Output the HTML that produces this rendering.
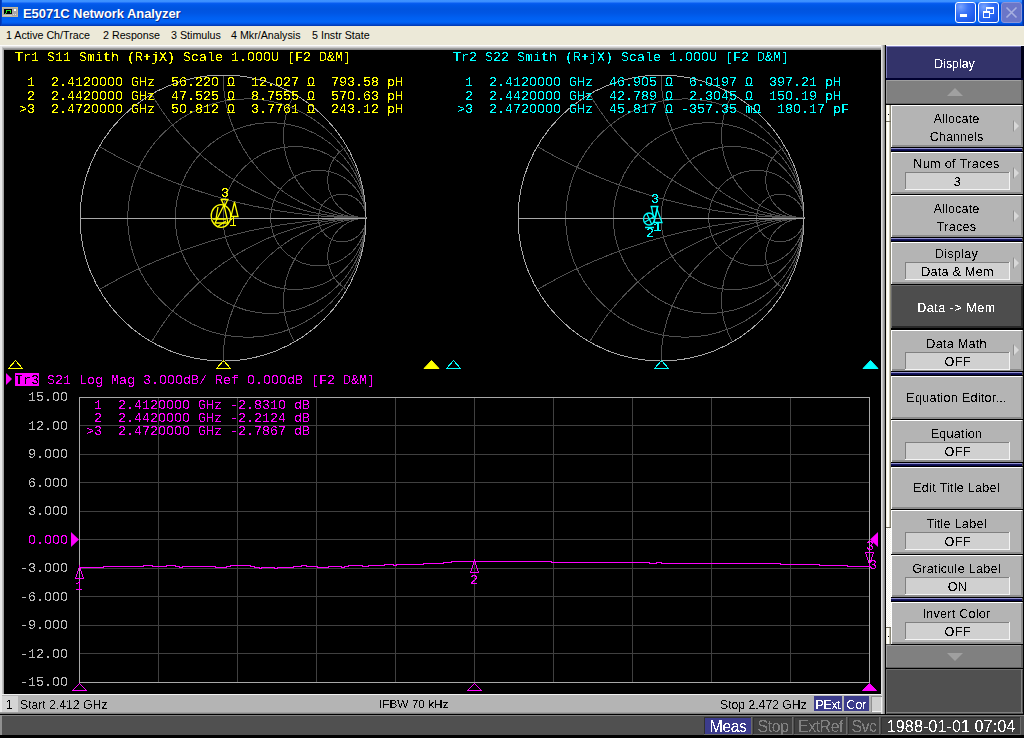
<!DOCTYPE html>
<html><head><meta charset="utf-8">
<style>
html,body{margin:0;padding:0;width:1024px;height:738px;overflow:hidden;background:#ece9d8;}
.a{position:absolute;}
.t{position:absolute;white-space:pre;line-height:1;}
.c{filter:url(#crisp);}
.m{font-family:"Liberation Mono",monospace;font-size:13.333px;}
.s{font-family:"Liberation Sans",sans-serif;}
</style></head><body>
<svg width="0" height="0" style="position:absolute"><filter id="crisp" x="-20%" y="-50%" width="140%" height="200%"><feComponentTransfer><feFuncA type="discrete" tableValues="0 1"/></feComponentTransfer></filter></svg>

<div class="a" style="left:0;top:0;width:1024px;height:26px;background:linear-gradient(to bottom,#3f93ff 0px,#3a8dff 2px,#0a5ef2 3px,#0058e8 5px,#0054df 9px,#0056e4 13px,#0060f2 18px,#0064f6 22px,#0052e0 24px,#0040c0 25px,#0038b0 26px);"></div>
<div class="a" style="left:0;top:0;width:2px;height:26px;background:linear-gradient(to right,#0030a8,#0048d0);"></div>
<div class="a" style="left:1022px;top:0;width:2px;height:26px;background:linear-gradient(to right,#0048d0,#002890);"></div>
<svg class="a" style="left:2px;top:7px" width="16" height="10" shape-rendering="crispEdges">
<rect x="0" y="0" width="16" height="10" fill="#c8b894"/>
<rect x="1" y="1" width="14" height="8" fill="#a8a8a8"/>
<rect x="2" y="2" width="8" height="5" fill="#000"/>
<polyline points="3,6 4,6 5,3 8,3 9,6" fill="none" stroke="#20e020" stroke-width="1"/>
<rect x="12" y="2" width="2" height="2" fill="#fff"/>
<rect x="11" y="7" width="1" height="1" fill="#e0e0e0"/><rect x="13" y="7" width="1" height="1" fill="#e0e0e0"/>
<rect x="1" y="8" width="9" height="1" fill="#c8c8c8"/>
</svg>
<div class="t s" style="left:24px;top:8.29px;font-size:13px;color:#0a2a8a;font-weight:bold;letter-spacing:-0.07px;">E5071C Network Analyzer</div>
<div class="t s" style="left:23px;top:7.29px;font-size:13px;color:#fff;font-weight:bold;letter-spacing:-0.07px;">E5071C Network Analyzer</div>
<div class="a" style="left:955px;top:2px;width:19px;height:19px;border:1px solid #fff;border-radius:3px;background:radial-gradient(circle at 25% 20%,#7aa4ff 0%,#3b74f6 35%,#1f5ef0 70%,#1a4fd8 100%);"></div>
<div class="a" style="left:960px;top:14px;width:7px;height:3px;background:#fff;"></div>
<div class="a" style="left:978px;top:2px;width:19px;height:19px;border:1px solid #fff;border-radius:3px;background:radial-gradient(circle at 25% 20%,#7aa4ff 0%,#3b74f6 35%,#1f5ef0 70%,#1a4fd8 100%);"></div>
<svg class="a" style="left:978px;top:2px" width="21" height="21" shape-rendering="crispEdges">
<rect x="8.5" y="5.5" width="7" height="6" fill="none" stroke="#fff"/><rect x="8" y="5" width="8" height="2" fill="#fff"/>
<rect x="5.5" y="9.5" width="6" height="6" fill="#2f6af4" stroke="#fff"/><rect x="5" y="9" width="7" height="2" fill="#fff"/>
</svg>
<div class="a" style="left:1001px;top:2px;width:19px;height:19px;border:1px solid #8a94d8;border-radius:3px;background:#6b76c8;"></div>
<svg class="a" style="left:1001px;top:2px" width="21" height="21">
<path d="M5.5 5.5 L15.5 15.5 M15.5 5.5 L5.5 15.5" stroke="#a8b0e0" stroke-width="1.6"/>
</svg>
<div class="a" style="left:0;top:26px;width:1024px;height:19px;background:#ece9d8;"></div>
<div class="t s" style="left:6px;top:30.44px;font-size:10.7px;color:#000;">1 Active Ch/Trace</div>
<div class="t s" style="left:103px;top:30.44px;font-size:10.7px;color:#000;">2 Response</div>
<div class="t s" style="left:171px;top:30.44px;font-size:10.7px;color:#000;">3 Stimulus</div>
<div class="t s" style="left:231px;top:30.44px;font-size:10.7px;color:#000;">4 Mkr/Analysis</div>
<div class="t s" style="left:312px;top:30.44px;font-size:10.7px;color:#000;">5 Instr State</div>
<div class="a" style="left:0;top:45px;width:886px;height:650px;background:#000;"></div>
<div class="a" style="left:0;top:45px;width:1024px;height:1px;background:#fcfcfc;"></div>
<div class="a" style="left:0;top:46px;width:886px;height:1px;background:#e0e0e0;"></div>
<div class="a" style="left:0;top:47px;width:886px;height:1px;background:#c8c8c8;"></div>
<div class="a" style="left:2px;top:48px;width:884px;height:1px;background:#a0a0a0;"></div>
<div class="a" style="left:3px;top:49px;width:883px;height:1px;background:#888888;"></div>
<div class="a" style="left:0;top:46px;width:2px;height:648px;background:#e8e8e8;"></div>
<div class="a" style="left:2px;top:48px;width:1px;height:646px;background:#c0c0c0;"></div>
<div class="a" style="left:3px;top:49px;width:1px;height:645px;background:#a0a0a0;"></div>
<div class="a" style="left:881px;top:45px;width:1px;height:669px;background:#e0e0e0;"></div>
<div class="a" style="left:882px;top:45px;width:1px;height:669px;background:#c4c4c4;"></div>
<div class="a" style="left:883px;top:45px;width:1px;height:669px;background:#a4a4a4;"></div>
<div class="a" style="left:884px;top:45px;width:1px;height:669px;background:#888888;"></div>
<div class="a" style="left:885px;top:45px;width:1px;height:669px;background:#000000;"></div>
<svg class="a" style="left:0;top:0" width="1024" height="738">
<g shape-rendering="crispEdges">
<circle cx="246.883" cy="218.05" r="119.167" fill="none" stroke="#505050" stroke-width="1"/>
<circle cx="270.717" cy="218.05" r="95.333" fill="none" stroke="#505050" stroke-width="1"/>
<circle cx="294.550" cy="218.05" r="71.500" fill="none" stroke="#505050" stroke-width="1"/>
<circle cx="318.383" cy="218.05" r="47.667" fill="none" stroke="#505050" stroke-width="1"/>
<circle cx="342.217" cy="218.05" r="23.833" fill="none" stroke="#505050" stroke-width="1"/>
<path d="M99.208 146.550 A533.683 533.683 0 0 0 366.050 218.050" fill="none" stroke="#505050" stroke-width="1"/>
<path d="M99.208 289.550 A533.683 533.683 0 0 1 366.050 218.050" fill="none" stroke="#505050" stroke-width="1"/>
<path d="M151.550 94.208 A247.683 247.683 0 0 0 366.050 218.050" fill="none" stroke="#505050" stroke-width="1"/>
<path d="M151.550 341.892 A247.683 247.683 0 0 1 366.050 218.050" fill="none" stroke="#505050" stroke-width="1"/>
<path d="M223.050 75.050 A143.000 143.000 0 0 0 366.050 218.050" fill="none" stroke="#505050" stroke-width="1"/>
<path d="M223.050 361.050 A143.000 143.000 0 0 1 366.050 218.050" fill="none" stroke="#505050" stroke-width="1"/>
<path d="M294.550 94.208 A82.561 82.561 0 0 0 366.050 218.050" fill="none" stroke="#505050" stroke-width="1"/>
<path d="M294.550 341.892 A82.561 82.561 0 0 1 366.050 218.050" fill="none" stroke="#505050" stroke-width="1"/>
<path d="M346.892 146.550 A38.317 38.317 0 0 0 366.050 218.050" fill="none" stroke="#505050" stroke-width="1"/>
<path d="M346.892 289.550 A38.317 38.317 0 0 1 366.050 218.050" fill="none" stroke="#505050" stroke-width="1"/>
<circle cx="223.05" cy="218.05" r="143" fill="none" stroke="#a8a8a8" stroke-width="1"/>
<line x1="80" y1="218.5" x2="367" y2="218.5" stroke="#a8a8a8" stroke-width="1"/>
<circle cx="684.883" cy="218.05" r="119.167" fill="none" stroke="#505050" stroke-width="1"/>
<circle cx="708.717" cy="218.05" r="95.333" fill="none" stroke="#505050" stroke-width="1"/>
<circle cx="732.550" cy="218.05" r="71.500" fill="none" stroke="#505050" stroke-width="1"/>
<circle cx="756.383" cy="218.05" r="47.667" fill="none" stroke="#505050" stroke-width="1"/>
<circle cx="780.217" cy="218.05" r="23.833" fill="none" stroke="#505050" stroke-width="1"/>
<path d="M537.208 146.550 A533.683 533.683 0 0 0 804.050 218.050" fill="none" stroke="#505050" stroke-width="1"/>
<path d="M537.208 289.550 A533.683 533.683 0 0 1 804.050 218.050" fill="none" stroke="#505050" stroke-width="1"/>
<path d="M589.550 94.208 A247.683 247.683 0 0 0 804.050 218.050" fill="none" stroke="#505050" stroke-width="1"/>
<path d="M589.550 341.892 A247.683 247.683 0 0 1 804.050 218.050" fill="none" stroke="#505050" stroke-width="1"/>
<path d="M661.050 75.050 A143.000 143.000 0 0 0 804.050 218.050" fill="none" stroke="#505050" stroke-width="1"/>
<path d="M661.050 361.050 A143.000 143.000 0 0 1 804.050 218.050" fill="none" stroke="#505050" stroke-width="1"/>
<path d="M732.550 94.208 A82.561 82.561 0 0 0 804.050 218.050" fill="none" stroke="#505050" stroke-width="1"/>
<path d="M732.550 341.892 A82.561 82.561 0 0 1 804.050 218.050" fill="none" stroke="#505050" stroke-width="1"/>
<path d="M784.892 146.550 A38.317 38.317 0 0 0 804.050 218.050" fill="none" stroke="#505050" stroke-width="1"/>
<path d="M784.892 289.550 A38.317 38.317 0 0 1 804.050 218.050" fill="none" stroke="#505050" stroke-width="1"/>
<circle cx="661.05" cy="218.05" r="143" fill="none" stroke="#a8a8a8" stroke-width="1"/>
<line x1="518" y1="218.5" x2="805" y2="218.5" stroke="#a8a8a8" stroke-width="1"/>
</g>
<g shape-rendering="crispEdges">
<line x1="158.5" y1="397" x2="158.5" y2="682" stroke="#404040"/>
<line x1="237.5" y1="397" x2="237.5" y2="682" stroke="#404040"/>
<line x1="316.5" y1="397" x2="316.5" y2="682" stroke="#404040"/>
<line x1="395.5" y1="397" x2="395.5" y2="682" stroke="#404040"/>
<line x1="474.5" y1="397" x2="474.5" y2="682" stroke="#404040"/>
<line x1="553.5" y1="397" x2="553.5" y2="682" stroke="#404040"/>
<line x1="632.5" y1="397" x2="632.5" y2="682" stroke="#404040"/>
<line x1="711.5" y1="397" x2="711.5" y2="682" stroke="#404040"/>
<line x1="790.5" y1="397" x2="790.5" y2="682" stroke="#404040"/>
<line x1="79" y1="425.5" x2="869" y2="425.5" stroke="#404040"/>
<line x1="79" y1="454.5" x2="869" y2="454.5" stroke="#404040"/>
<line x1="79" y1="482.5" x2="869" y2="482.5" stroke="#404040"/>
<line x1="79" y1="511.5" x2="869" y2="511.5" stroke="#404040"/>
<line x1="79" y1="539.5" x2="869" y2="539.5" stroke="#404040"/>
<line x1="79" y1="568.5" x2="869" y2="568.5" stroke="#404040"/>
<line x1="79" y1="596.5" x2="869" y2="596.5" stroke="#404040"/>
<line x1="79" y1="625.5" x2="869" y2="625.5" stroke="#404040"/>
<line x1="79" y1="653.5" x2="869" y2="653.5" stroke="#404040"/>
<rect x="79.5" y="397.5" width="790" height="285" fill="none" stroke="#a8a8a8"/>
</g>
<path d="M79 567.5H104M103.5 566V568M104 566.5H144M143.5 565V567M144 565.5H153M152.5 565V567M153 566.5H167M166.5 565V567M167 565.5H176M175.5 565V567M176 566.5H180M179.5 566V568M180 567.5H183M182.5 566V568M183 566.5H216M215.5 566V568M216 567.5H227M226.5 566V568M227 566.5H231M230.5 565V567M231 565.5H251M250.5 565V567M251 566.5H255M254.5 566V568M255 567.5H260M259.5 567V569M260 568.5H262M261.5 567V569M262 567.5H275M274.5 567V569M275 568.5H278M277.5 567V569M278 567.5H294M293.5 566V568M294 566.5H302M301.5 565V567M302 565.5H307M306.5 565V567M307 566.5H318M317.5 566V568M318 567.5H329M328.5 566V568M329 566.5H342M341.5 566V568M342 567.5H345M344.5 566V568M345 566.5H349M348.5 565V567M349 565.5H363M362.5 565V567M363 566.5H369M368.5 565V567M369 565.5H385M384.5 564V566M385 564.5H394M393.5 564V566M394 565.5H397M396.5 564V566M397 564.5H424M423.5 563V565M424 563.5H444M443.5 562V564M444 562.5H452M451.5 561V563M452 561.5H552M551.5 561V563M552 562.5H650M649.5 562V564M650 563.5H657M656.5 562V564M657 562.5H662M661.5 562V564M662 563.5H781M780.5 563V565M781 564.5H820M819.5 564V566M820 565.5H848M847.5 565V567M848 566.5H870" fill="none" stroke="#ff00ff" stroke-width="1" shape-rendering="crispEdges"/>
<path d="M15.5 360.5 L22.5 368.5 L8.5 368.5 Z" fill="none" stroke="#ffff00" stroke-width="1" shape-rendering="crispEdges"/>
<path d="M223.5 360.5 L230.5 368.5 L216.5 368.5 Z" fill="none" stroke="#ffff00" stroke-width="1" shape-rendering="crispEdges"/>
<path d="M431.5 360.5 L439.0 368.5 L424.0 368.5 Z" fill="#ffff00" stroke="#ffff00" stroke-width="1"/>
<path d="M453.5 360.5 L460.5 368.5 L446.5 368.5 Z" fill="none" stroke="#00ffff" stroke-width="1" shape-rendering="crispEdges"/>
<path d="M661.5 360.5 L668.5 368.5 L654.5 368.5 Z" fill="none" stroke="#00ffff" stroke-width="1" shape-rendering="crispEdges"/>
<path d="M870.5 360.5 L878.0 368.5 L863.0 368.5 Z" fill="#00ffff" stroke="#00ffff" stroke-width="1"/>
<path d="M6 373 L12 379 L6 385 Z" fill="#ff00ff"/>
<path d="M71 532 L79 539.5 L71 547 Z" fill="#ff00ff"/>
<path d="M878 532 L870 539.5 L878 547 Z" fill="#ff00ff"/>
<path d="M79.5 683.5 L86.5 690.5 L72.5 690.5 Z" fill="none" stroke="#ff00ff" stroke-width="1" shape-rendering="crispEdges"/>
<path d="M474.5 683.5 L481.5 690.5 L467.5 690.5 Z" fill="none" stroke="#ff00ff" stroke-width="1" shape-rendering="crispEdges"/>
<path d="M869.5 683.5 L876.5 690.5 L862.5 690.5 Z" fill="#ff00ff" stroke="#ff00ff" stroke-width="1"/>
<path d="M79.5 566.5 L83.5 578.5 L75.5 578.5 Z" fill="none" stroke="#ff00ff" stroke-width="1" shape-rendering="crispEdges"/>
<path d="M474.5 560.5 L478.5 572.5 L470.5 572.5 Z" fill="none" stroke="#ff00ff" stroke-width="1" shape-rendering="crispEdges"/>
<path d="M865.5 552.5 L873.5 552.5 L869.5 564.5 Z" fill="none" stroke="#ff00ff" stroke-width="1" shape-rendering="crispEdges"/>
<g fill="none" stroke="#ffff00" stroke-width="1.3"><ellipse cx="221" cy="216" rx="9.8" ry="11.3"/><path d="M220.5 199.5 H228.5 M221.5 200 L224.5 206.5 M227.5 200 L224.5 206.5"/><path d="M224 205 L215 223 L228 223 Z"/><path d="M218 207 L216 219 M213 219 H226 M217 227 L226 221"/><path d="M234.5 202 L231 216.5 L238 216.5 Z"/></g>
<g fill="none" stroke="#00ffff" stroke-width="1.3"><ellipse cx="649" cy="219" rx="5.5" ry="6"/><path d="M650.5 206.5 H658.5 M651.5 207 L653.5 217 M657.5 207 L655.5 217"/><path d="M657 209 L654 222.5 L662 222.5 Z"/><path d="M645 227.5 H654 M647 214 L652 225 M645 222 L655 216"/></g>
</svg>
<div class="t m c" style="left:15px;top:50.79px;color:#ffff00;">Tr1 S11 Smith (R+jX) Scale 1.OOOU [F2 D&amp;M]</div>
<div class="t m c" style="left:19px;top:76.49px;color:#ffff00;"> 1  2.412OOOO GHz  56.22O Ω  12.O27 Ω  793.58 pH</div>
<div class="t m c" style="left:19px;top:89.79px;color:#ffff00;"> 2  2.442OOOO GHz  47.525 Ω  8.7555 Ω  57O.63 pH</div>
<div class="t m c" style="left:19px;top:103.09px;color:#ffff00;">&gt;3  2.472OOOO GHz  5O.812 Ω  3.7761 Ω  243.12 pH</div>
<div class="t m c" style="left:453px;top:50.79px;color:#00ffff;">Tr2 S22 Smith (R+jX) Scale 1.OOOU [F2 D&amp;M]</div>
<div class="t m c" style="left:457px;top:76.49px;color:#00ffff;"> 1  2.412OOOO GHz  46.9O5 Ω  6.O197 Ω  397.21 pH</div>
<div class="t m c" style="left:457px;top:89.79px;color:#00ffff;"> 2  2.442OOOO GHz  42.789 Ω  2.3O45 Ω  15O.19 pH</div>
<div class="t m c" style="left:457px;top:103.09px;color:#00ffff;">&gt;3  2.472OOOO GHz  45.817 Ω -357.35 mΩ  18O.17 pF</div>
<div class="a" style="left:15px;top:373px;width:24px;height:13px;background:#ff00ff;"></div>
<div class="t m c" style="left:15px;top:373.79px;color:#000;">Tr3</div>
<div class="t m c" style="left:39px;top:373.79px;color:#ff00ff;"> S21 Log Mag 3.OOOdB/ Ref O.OOOdB [F2 D&amp;M]</div>
<div class="t m c" style="left:86px;top:398.79px;color:#ff00ff;"> 1  2.412OOOO GHz -2.831O dB</div>
<div class="t m c" style="left:86px;top:412.09px;color:#ff00ff;"> 2  2.442OOOO GHz -2.2124 dB</div>
<div class="t m c" style="left:86px;top:425.39px;color:#ff00ff;">&gt;3  2.472OOOO GHz -2.7867 dB</div>
<div class="t m c" style="left:28px;top:391.29px;color:#b8b8b8;">15.OO</div>
<div class="t m c" style="left:28px;top:419.79px;color:#b8b8b8;">12.OO</div>
<div class="t m c" style="left:28px;top:448.29px;color:#b8b8b8;">9.OOO</div>
<div class="t m c" style="left:28px;top:476.79px;color:#b8b8b8;">6.OOO</div>
<div class="t m c" style="left:28px;top:505.29px;color:#b8b8b8;">3.OOO</div>
<div class="t m c" style="left:28px;top:533.79px;color:#ff00ff;">O.OOO</div>
<div class="t m c" style="left:20px;top:562.29px;color:#b8b8b8;">-3.OOO</div>
<div class="t m c" style="left:20px;top:590.79px;color:#b8b8b8;">-6.OOO</div>
<div class="t m c" style="left:20px;top:619.29px;color:#b8b8b8;">-9.OOO</div>
<div class="t m c" style="left:20px;top:647.79px;color:#b8b8b8;">-12.OO</div>
<div class="t m c" style="left:20px;top:676.29px;color:#b8b8b8;">-15.OO</div>
<div class="t m c" style="left:75px;top:579.79px;color:#ff00ff;">1</div>
<div class="t m c" style="left:470px;top:573.79px;color:#ff00ff;">2</div>
<div class="t m c" style="left:866px;top:539.79px;color:#ff00ff;">3</div>
<div class="t m c" style="left:869px;top:558.79px;color:#ff00ff;">3</div>
<div class="t m c" style="left:221px;top:186.79px;color:#ffff00;">3</div>
<div class="t m c" style="left:229px;top:216.09px;color:#ffff00;">1</div>
<div class="t m c" style="left:651px;top:192.79px;color:#00ffff;">3</div>
<div class="t m c" style="left:653.5px;top:221.29px;color:#00ffff;">1</div>
<div class="t m c" style="left:646px;top:227.39px;color:#00ffff;">2</div>
<div class="a" style="left:886px;top:46px;width:138px;height:669px;background:#505050;"></div>
<div class="a" style="left:1023px;top:46px;width:1px;height:669px;background:#000;"></div>
<div class="a" style="left:886px;top:46px;width:138px;height:34px;background:#000018;"></div>
<div class="a" style="left:886px;top:46px;width:135px;height:32px;background:#33336a;"></div>
<div class="a" style="left:886px;top:46px;width:135px;height:1px;background:#8080c0;"></div>
<div class="a" style="left:886px;top:46px;width:1px;height:32px;background:#8080c0;"></div>
<div class="a" style="left:886px;top:78px;width:137px;height:2px;background:#000030;"></div>
<div class="t s c" style="left:886px;width:137px;text-align:center;top:58.09px;font-size:12.3px;color:#fff;">Display</div>
<div class="a" style="left:886px;top:80px;width:137px;height:24px;background:#808080;"></div>
<div class="a" style="left:886px;top:80px;width:137px;height:1px;background:#a0a0a0;"></div>
<div class="a" style="left:886px;top:80px;width:1px;height:24px;background:#a0a0a0;"></div>
<div class="a" style="left:886px;top:103px;width:137px;height:1px;background:#606060;"></div>
<div class="a" style="left:1021px;top:80px;width:2px;height:24px;background:#606060;"></div>
<div class="a" style="left:886px;top:104px;width:137px;height:1px;background:#000;"></div>
<svg class="a" style="left:946px;top:87px" width="18" height="10"><path d="M1 9 L9 1 L17 9 Z" fill="#a0a0a0"/></svg>
<div class="a" style="left:886px;top:645px;width:137px;height:23px;background:#808080;"></div>
<div class="a" style="left:886px;top:645px;width:137px;height:1px;background:#a0a0a0;"></div>
<div class="a" style="left:886px;top:645px;width:1px;height:23px;background:#a0a0a0;"></div>
<div class="a" style="left:886px;top:667px;width:137px;height:1px;background:#606060;"></div>
<div class="a" style="left:1021px;top:645px;width:2px;height:23px;background:#606060;"></div>
<div class="a" style="left:886px;top:668px;width:137px;height:1px;background:#000;"></div>
<svg class="a" style="left:946px;top:652px" width="18" height="10"><path d="M1 1 L9 9 L17 1 Z" fill="#a0a0a0"/></svg>
<div class="a" style="left:886px;top:669px;width:137px;height:45px;background:#505050;"></div>
<div class="a" style="left:886px;top:669px;width:137px;height:1px;background:#707070;"></div>
<div class="a" style="left:886px;top:669px;width:1px;height:45px;background:#707070;"></div>
<div class="a" style="left:886px;top:105px;width:5px;height:539px;background:linear-gradient(to right,#f0ecd8 0,#f0ecd8 1px,#ffffff 1px,#fdfdf6 3px,#d0ccb8 3px,#c8c4b0 4px,#8a8878 4px);"></div>
<div class="a" style="left:886px;top:121px;width:5px;height:1px;background:#706c5c;"></div>
<div class="a" style="left:888px;top:114px;width:1px;height:1px;background:#000;"></div>
<div class="a" style="left:886px;top:527px;width:5px;height:1px;background:#706c5c;"></div>
<div class="a" style="left:886px;top:528px;width:5px;height:100px;background:repeating-conic-gradient(#f4f2e8 0 25%, #ffffff 0 50%) 0 0/2px 2px;"></div>
<div class="a" style="left:886px;top:627px;width:5px;height:1px;background:#706c5c;"></div>
<div class="a" style="left:888px;top:636px;width:1px;height:1px;background:#000;"></div>
<div class="a" style="left:891px;top:105px;width:132px;height:42px;background:#b4b4b4;"></div>
<div class="a" style="left:891px;top:105px;width:131px;height:1px;background:#ffffff;"></div>
<div class="a" style="left:891px;top:105px;width:1px;height:42px;background:#ffffff;"></div>
<div class="a" style="left:892px;top:145px;width:131px;height:2px;background:#8c8c8c;"></div>
<div class="a" style="left:1021px;top:106px;width:2px;height:42px;background:#8c8c8c;"></div>
<div class="a" style="left:891px;top:147px;width:132px;height:1px;background:#000;"></div>
<div class="a" style="left:1023px;top:105px;width:1px;height:43px;background:#000;"></div>
<div class="t s c" style="left:891px;width:131px;text-align:center;top:112.83px;font-size:12.6px;color:#000;letter-spacing:0.15px;">Allocate</div>
<div class="t s c" style="left:891px;width:131px;text-align:center;top:130.83px;font-size:12.6px;color:#000;letter-spacing:0.05px;">Channels</div>
<svg class="a" style="left:1012px;top:120px" width="8" height="12"><path d="M1.5 0.5 L7 6 L1.5 11.5 Z" fill="#d8d8d8"/><path d="M1.5 0.5 L1.5 11.5" stroke="#909090" stroke-width="1"/></svg>
<div class="a" style="left:891px;top:147px;width:132px;height:1px;background:#000;"></div>
<div class="a" style="left:891px;top:148px;width:131px;height:1px;background:#9090d0;"></div>
<div class="a" style="left:891px;top:149px;width:131px;height:2px;background:linear-gradient(to bottom,#20206a,#000040);"></div>
<div class="a" style="left:891px;top:151px;width:132px;height:1px;background:#000;"></div>
<div class="a" style="left:891px;top:152px;width:132px;height:42px;background:#b4b4b4;"></div>
<div class="a" style="left:891px;top:152px;width:131px;height:1px;background:#ffffff;"></div>
<div class="a" style="left:891px;top:152px;width:1px;height:42px;background:#ffffff;"></div>
<div class="a" style="left:892px;top:192px;width:131px;height:2px;background:#8c8c8c;"></div>
<div class="a" style="left:1021px;top:153px;width:2px;height:42px;background:#8c8c8c;"></div>
<div class="a" style="left:891px;top:194px;width:132px;height:1px;background:#000;"></div>
<div class="a" style="left:1023px;top:152px;width:1px;height:43px;background:#000;"></div>
<div class="t s c" style="left:891px;width:131px;text-align:center;top:157.83px;font-size:12.6px;color:#000;letter-spacing:0.35px;">Num of Traces</div>
<div class="a" style="left:905px;top:172px;width:105px;height:18px;background:#d0d0d0;"></div>
<div class="a" style="left:905px;top:172px;width:105px;height:1px;background:#808080;"></div>
<div class="a" style="left:905px;top:172px;width:1px;height:18px;background:#808080;"></div>
<div class="a" style="left:905px;top:189px;width:105px;height:1px;background:#f4f4f4;"></div>
<div class="a" style="left:1009px;top:172px;width:1px;height:18px;background:#f4f4f4;"></div>
<div class="t s c" style="left:905px;width:105px;text-align:center;top:175.83px;font-size:12.6px;color:#000;letter-spacing:0.25px;">3</div>
<svg class="a" style="left:1012px;top:167px" width="8" height="12"><path d="M1.5 0.5 L7 6 L1.5 11.5 Z" fill="#d8d8d8"/><path d="M1.5 0.5 L1.5 11.5" stroke="#909090" stroke-width="1"/></svg>
<div class="a" style="left:891px;top:195px;width:132px;height:42px;background:#b4b4b4;"></div>
<div class="a" style="left:891px;top:195px;width:131px;height:1px;background:#ffffff;"></div>
<div class="a" style="left:891px;top:195px;width:1px;height:42px;background:#ffffff;"></div>
<div class="a" style="left:892px;top:235px;width:131px;height:2px;background:#8c8c8c;"></div>
<div class="a" style="left:1021px;top:196px;width:2px;height:42px;background:#8c8c8c;"></div>
<div class="a" style="left:891px;top:237px;width:132px;height:1px;background:#000;"></div>
<div class="a" style="left:1023px;top:195px;width:1px;height:43px;background:#000;"></div>
<div class="t s c" style="left:891px;width:131px;text-align:center;top:202.83px;font-size:12.6px;color:#000;letter-spacing:0.15px;">Allocate</div>
<div class="t s c" style="left:891px;width:131px;text-align:center;top:220.83px;font-size:12.6px;color:#000;letter-spacing:0.25px;">Traces</div>
<svg class="a" style="left:1012px;top:210px" width="8" height="12"><path d="M1.5 0.5 L7 6 L1.5 11.5 Z" fill="#d8d8d8"/><path d="M1.5 0.5 L1.5 11.5" stroke="#909090" stroke-width="1"/></svg>
<div class="a" style="left:891px;top:237px;width:132px;height:1px;background:#000;"></div>
<div class="a" style="left:891px;top:238px;width:131px;height:1px;background:#9090d0;"></div>
<div class="a" style="left:891px;top:239px;width:131px;height:2px;background:linear-gradient(to bottom,#20206a,#000040);"></div>
<div class="a" style="left:891px;top:241px;width:132px;height:1px;background:#000;"></div>
<div class="a" style="left:891px;top:242px;width:132px;height:42px;background:#b4b4b4;"></div>
<div class="a" style="left:891px;top:242px;width:131px;height:1px;background:#ffffff;"></div>
<div class="a" style="left:891px;top:242px;width:1px;height:42px;background:#ffffff;"></div>
<div class="a" style="left:892px;top:282px;width:131px;height:2px;background:#8c8c8c;"></div>
<div class="a" style="left:1021px;top:243px;width:2px;height:42px;background:#8c8c8c;"></div>
<div class="a" style="left:891px;top:284px;width:132px;height:1px;background:#000;"></div>
<div class="a" style="left:1023px;top:242px;width:1px;height:43px;background:#000;"></div>
<div class="t s c" style="left:891px;width:131px;text-align:center;top:247.83px;font-size:12.6px;color:#000;letter-spacing:0.25px;">Display</div>
<div class="a" style="left:905px;top:262px;width:105px;height:18px;background:#d0d0d0;"></div>
<div class="a" style="left:905px;top:262px;width:105px;height:1px;background:#808080;"></div>
<div class="a" style="left:905px;top:262px;width:1px;height:18px;background:#808080;"></div>
<div class="a" style="left:905px;top:279px;width:105px;height:1px;background:#f4f4f4;"></div>
<div class="a" style="left:1009px;top:262px;width:1px;height:18px;background:#f4f4f4;"></div>
<div class="t s c" style="left:905px;width:105px;text-align:center;top:265.83px;font-size:12.6px;color:#000;letter-spacing:0.25px;">Data &amp; Mem</div>
<svg class="a" style="left:1012px;top:257px" width="8" height="12"><path d="M1.5 0.5 L7 6 L1.5 11.5 Z" fill="#d8d8d8"/><path d="M1.5 0.5 L1.5 11.5" stroke="#909090" stroke-width="1"/></svg>
<div class="a" style="left:891px;top:285px;width:132px;height:43px;background:#4d4d4d;"></div>
<div class="a" style="left:891px;top:285px;width:131px;height:1px;background:#6a6a6a;"></div>
<div class="a" style="left:891px;top:285px;width:1px;height:43px;background:#6a6a6a;"></div>
<div class="a" style="left:892px;top:326px;width:131px;height:2px;background:#282828;"></div>
<div class="a" style="left:1021px;top:286px;width:2px;height:43px;background:#282828;"></div>
<div class="a" style="left:891px;top:328px;width:132px;height:1px;background:#000;"></div>
<div class="a" style="left:1023px;top:285px;width:1px;height:44px;background:#000;"></div>
<div class="t s c" style="left:891px;width:131px;text-align:center;top:301.83px;font-size:12.6px;color:#fff;letter-spacing:0.5px;">Data -&gt; Mem</div>
<div class="a" style="left:891px;top:329px;width:132px;height:1px;background:#000;"></div>
<div class="a" style="left:891px;top:330px;width:132px;height:41px;background:#b4b4b4;"></div>
<div class="a" style="left:891px;top:330px;width:131px;height:1px;background:#ffffff;"></div>
<div class="a" style="left:891px;top:330px;width:1px;height:41px;background:#ffffff;"></div>
<div class="a" style="left:892px;top:369px;width:131px;height:2px;background:#8c8c8c;"></div>
<div class="a" style="left:1021px;top:331px;width:2px;height:41px;background:#8c8c8c;"></div>
<div class="a" style="left:891px;top:371px;width:132px;height:1px;background:#000;"></div>
<div class="a" style="left:1023px;top:330px;width:1px;height:42px;background:#000;"></div>
<div class="t s c" style="left:891px;width:131px;text-align:center;top:337.83px;font-size:12.6px;color:#000;letter-spacing:0.25px;">Data Math</div>
<div class="a" style="left:905px;top:352px;width:105px;height:18px;background:#d0d0d0;"></div>
<div class="a" style="left:905px;top:352px;width:105px;height:1px;background:#808080;"></div>
<div class="a" style="left:905px;top:352px;width:1px;height:18px;background:#808080;"></div>
<div class="a" style="left:905px;top:369px;width:105px;height:1px;background:#f4f4f4;"></div>
<div class="a" style="left:1009px;top:352px;width:1px;height:18px;background:#f4f4f4;"></div>
<div class="t s c" style="left:905px;width:105px;text-align:center;top:355.83px;font-size:12.6px;color:#000;letter-spacing:0.25px;">OFF</div>
<svg class="a" style="left:1012px;top:344px" width="8" height="12"><path d="M1.5 0.5 L7 6 L1.5 11.5 Z" fill="#d8d8d8"/><path d="M1.5 0.5 L1.5 11.5" stroke="#909090" stroke-width="1"/></svg>
<div class="a" style="left:891px;top:371px;width:132px;height:1px;background:#000;"></div>
<div class="a" style="left:891px;top:372px;width:131px;height:1px;background:#9090d0;"></div>
<div class="a" style="left:891px;top:373px;width:131px;height:2px;background:linear-gradient(to bottom,#20206a,#000040);"></div>
<div class="a" style="left:891px;top:375px;width:132px;height:1px;background:#000;"></div>
<div class="a" style="left:891px;top:376px;width:132px;height:43px;background:#b4b4b4;"></div>
<div class="a" style="left:891px;top:376px;width:131px;height:1px;background:#ffffff;"></div>
<div class="a" style="left:891px;top:376px;width:1px;height:43px;background:#ffffff;"></div>
<div class="a" style="left:892px;top:417px;width:131px;height:2px;background:#8c8c8c;"></div>
<div class="a" style="left:1021px;top:377px;width:2px;height:43px;background:#8c8c8c;"></div>
<div class="a" style="left:891px;top:419px;width:132px;height:1px;background:#000;"></div>
<div class="a" style="left:1023px;top:376px;width:1px;height:44px;background:#000;"></div>
<div class="t s c" style="left:891px;width:131px;text-align:center;top:391.83px;font-size:12.6px;color:#000;letter-spacing:0.25px;">Equation Editor...</div>
<div class="a" style="left:891px;top:420px;width:132px;height:42px;background:#b4b4b4;"></div>
<div class="a" style="left:891px;top:420px;width:131px;height:1px;background:#ffffff;"></div>
<div class="a" style="left:891px;top:420px;width:1px;height:42px;background:#ffffff;"></div>
<div class="a" style="left:892px;top:460px;width:131px;height:2px;background:#8c8c8c;"></div>
<div class="a" style="left:1021px;top:421px;width:2px;height:42px;background:#8c8c8c;"></div>
<div class="a" style="left:891px;top:462px;width:132px;height:1px;background:#000;"></div>
<div class="a" style="left:1023px;top:420px;width:1px;height:43px;background:#000;"></div>
<div class="t s c" style="left:891px;width:131px;text-align:center;top:427.83px;font-size:12.6px;color:#000;letter-spacing:0.25px;">Equation</div>
<div class="a" style="left:905px;top:442px;width:105px;height:18px;background:#d0d0d0;"></div>
<div class="a" style="left:905px;top:442px;width:105px;height:1px;background:#808080;"></div>
<div class="a" style="left:905px;top:442px;width:1px;height:18px;background:#808080;"></div>
<div class="a" style="left:905px;top:459px;width:105px;height:1px;background:#f4f4f4;"></div>
<div class="a" style="left:1009px;top:442px;width:1px;height:18px;background:#f4f4f4;"></div>
<div class="t s c" style="left:905px;width:105px;text-align:center;top:445.83px;font-size:12.6px;color:#000;letter-spacing:0.25px;">OFF</div>
<div class="a" style="left:891px;top:462px;width:132px;height:1px;background:#000;"></div>
<div class="a" style="left:891px;top:463px;width:131px;height:1px;background:#9090d0;"></div>
<div class="a" style="left:891px;top:464px;width:131px;height:2px;background:linear-gradient(to bottom,#20206a,#000040);"></div>
<div class="a" style="left:891px;top:466px;width:132px;height:1px;background:#000;"></div>
<div class="a" style="left:891px;top:467px;width:132px;height:42px;background:#b4b4b4;"></div>
<div class="a" style="left:891px;top:467px;width:131px;height:1px;background:#ffffff;"></div>
<div class="a" style="left:891px;top:467px;width:1px;height:42px;background:#ffffff;"></div>
<div class="a" style="left:892px;top:507px;width:131px;height:2px;background:#8c8c8c;"></div>
<div class="a" style="left:1021px;top:468px;width:2px;height:42px;background:#8c8c8c;"></div>
<div class="a" style="left:891px;top:509px;width:132px;height:1px;background:#000;"></div>
<div class="a" style="left:1023px;top:467px;width:1px;height:43px;background:#000;"></div>
<div class="t s c" style="left:891px;width:131px;text-align:center;top:481.83px;font-size:12.6px;color:#000;letter-spacing:0.25px;">Edit Title Label</div>
<div class="a" style="left:891px;top:510px;width:132px;height:44px;background:#b4b4b4;"></div>
<div class="a" style="left:891px;top:510px;width:131px;height:1px;background:#ffffff;"></div>
<div class="a" style="left:891px;top:510px;width:1px;height:44px;background:#ffffff;"></div>
<div class="a" style="left:892px;top:552px;width:131px;height:2px;background:#8c8c8c;"></div>
<div class="a" style="left:1021px;top:511px;width:2px;height:44px;background:#8c8c8c;"></div>
<div class="a" style="left:891px;top:554px;width:132px;height:1px;background:#000;"></div>
<div class="a" style="left:1023px;top:510px;width:1px;height:45px;background:#000;"></div>
<div class="t s c" style="left:891px;width:131px;text-align:center;top:517.83px;font-size:12.6px;color:#000;letter-spacing:0.25px;">Title Label</div>
<div class="a" style="left:905px;top:532px;width:105px;height:18px;background:#d0d0d0;"></div>
<div class="a" style="left:905px;top:532px;width:105px;height:1px;background:#808080;"></div>
<div class="a" style="left:905px;top:532px;width:1px;height:18px;background:#808080;"></div>
<div class="a" style="left:905px;top:549px;width:105px;height:1px;background:#f4f4f4;"></div>
<div class="a" style="left:1009px;top:532px;width:1px;height:18px;background:#f4f4f4;"></div>
<div class="t s c" style="left:905px;width:105px;text-align:center;top:535.83px;font-size:12.6px;color:#000;letter-spacing:0.25px;">OFF</div>
<div class="a" style="left:891px;top:555px;width:132px;height:42px;background:#b4b4b4;"></div>
<div class="a" style="left:891px;top:555px;width:131px;height:1px;background:#ffffff;"></div>
<div class="a" style="left:891px;top:555px;width:1px;height:42px;background:#ffffff;"></div>
<div class="a" style="left:892px;top:595px;width:131px;height:2px;background:#8c8c8c;"></div>
<div class="a" style="left:1021px;top:556px;width:2px;height:42px;background:#8c8c8c;"></div>
<div class="a" style="left:891px;top:597px;width:132px;height:1px;background:#000;"></div>
<div class="a" style="left:1023px;top:555px;width:1px;height:43px;background:#000;"></div>
<div class="t s c" style="left:891px;width:131px;text-align:center;top:562.83px;font-size:12.6px;color:#000;letter-spacing:0.25px;">Graticule Label</div>
<div class="a" style="left:905px;top:577px;width:105px;height:18px;background:#d0d0d0;"></div>
<div class="a" style="left:905px;top:577px;width:105px;height:1px;background:#808080;"></div>
<div class="a" style="left:905px;top:577px;width:1px;height:18px;background:#808080;"></div>
<div class="a" style="left:905px;top:594px;width:105px;height:1px;background:#f4f4f4;"></div>
<div class="a" style="left:1009px;top:577px;width:1px;height:18px;background:#f4f4f4;"></div>
<div class="t s c" style="left:905px;width:105px;text-align:center;top:580.83px;font-size:12.6px;color:#000;letter-spacing:0.25px;">ON</div>
<div class="a" style="left:891px;top:597px;width:132px;height:1px;background:#000;"></div>
<div class="a" style="left:891px;top:598px;width:131px;height:1px;background:#9090d0;"></div>
<div class="a" style="left:891px;top:599px;width:131px;height:2px;background:linear-gradient(to bottom,#20206a,#000040);"></div>
<div class="a" style="left:891px;top:601px;width:132px;height:1px;background:#000;"></div>
<div class="a" style="left:891px;top:602px;width:132px;height:42px;background:#b4b4b4;"></div>
<div class="a" style="left:891px;top:602px;width:131px;height:1px;background:#ffffff;"></div>
<div class="a" style="left:891px;top:602px;width:1px;height:42px;background:#ffffff;"></div>
<div class="a" style="left:892px;top:642px;width:131px;height:2px;background:#8c8c8c;"></div>
<div class="a" style="left:1021px;top:603px;width:2px;height:42px;background:#8c8c8c;"></div>
<div class="a" style="left:891px;top:644px;width:132px;height:1px;background:#000;"></div>
<div class="a" style="left:1023px;top:602px;width:1px;height:43px;background:#000;"></div>
<div class="t s c" style="left:891px;width:131px;text-align:center;top:607.83px;font-size:12.6px;color:#000;letter-spacing:0.25px;">Invert Color</div>
<div class="a" style="left:905px;top:622px;width:105px;height:18px;background:#d0d0d0;"></div>
<div class="a" style="left:905px;top:622px;width:105px;height:1px;background:#808080;"></div>
<div class="a" style="left:905px;top:622px;width:1px;height:18px;background:#808080;"></div>
<div class="a" style="left:905px;top:639px;width:105px;height:1px;background:#f4f4f4;"></div>
<div class="a" style="left:1009px;top:622px;width:1px;height:18px;background:#f4f4f4;"></div>
<div class="t s c" style="left:905px;width:105px;text-align:center;top:625.83px;font-size:12.6px;color:#000;letter-spacing:0.25px;">OFF</div>
<div class="a" style="left:0;top:694px;width:881px;height:20px;background:#b4b4b4;"></div>
<div class="a" style="left:0;top:694px;width:881px;height:1px;background:#f0f0f0;"></div>
<div class="a" style="left:0;top:694px;width:2px;height:20px;background:#e8e8e8;"></div>
<div class="a" style="left:0;top:712px;width:881px;height:1px;background:#a0a0a0;"></div>
<div class="a" style="left:0;top:713px;width:881px;height:1px;background:#808080;"></div>
<div class="a" style="left:2px;top:696px;width:16px;height:16px;background:#d4d4d4;"></div>
<div class="t s c" style="left:6px;top:699.14px;font-size:12px;color:#000;">1</div>
<div class="t s c" style="left:20px;top:698.97px;font-size:12.2px;color:#000;">Start 2.412 GHz</div>
<div class="t s c" style="left:379px;top:699.31px;font-size:11.8px;color:#000;">IFBW 70 kHz</div>
<div class="t s c" style="left:720px;top:698.97px;font-size:12.2px;color:#000;">Stop 2.472 GHz</div>
<div class="a" style="left:814px;top:696px;width:28px;height:15px;background:#3c3c8c;"></div>
<div class="t s c" style="left:814px;width:28px;text-align:center;top:698.89px;font-size:12.3px;color:#fff;letter-spacing:-0.3px;">PExt</div>
<div class="a" style="left:844px;top:696px;width:25px;height:15px;background:#3c3c8c;"></div>
<div class="t s c" style="left:844px;width:25px;text-align:center;top:698.89px;font-size:12.3px;color:#fff;">Cor</div>
<div class="a" style="left:871px;top:696px;width:11px;height:16px;background:#d0d0d0;box-shadow:inset 1px 1px 0 #909090, inset -1px -1px 0 #f4f4f4;"></div>
<div class="a" style="left:886px;top:712px;width:137px;height:1px;background:#808080;"></div>
<div class="a" style="left:1021px;top:669px;width:1px;height:44px;background:#808080;"></div>
<div class="a" style="left:0;top:714px;width:1024px;height:1px;background:#000;"></div>
<div class="a" style="left:0;top:715px;width:1024px;height:23px;background:#505050;"></div>
<div class="a" style="left:0;top:715px;width:1024px;height:1px;background:#808080;"></div>
<div class="a" style="left:0;top:715px;width:2px;height:20px;background:#909090;"></div>
<div class="a" style="left:0;top:735px;width:1024px;height:3px;background:#000;"></div>
<div class="a" style="left:704px;top:717px;width:48px;height:18px;background:#3c3c8c;box-shadow:inset -1px -1px 0 #6a6a6a, inset 1px 1px 0 #303030;"></div>
<div class="t s c" style="left:704px;width:48px;text-align:center;top:718.95px;font-size:16px;color:#fff;letter-spacing:-0.5px;">Meas</div>
<div class="a" style="left:753px;top:717px;width:40px;height:18px;background:#404040;box-shadow:inset -1px -1px 0 #6a6a6a, inset 1px 1px 0 #303030;"></div>
<div class="t s c" style="left:753px;width:40px;text-align:center;top:718.95px;font-size:16px;color:#808080;letter-spacing:-0.5px;">Stop</div>
<div class="a" style="left:794px;top:717px;width:53px;height:18px;background:#404040;box-shadow:inset -1px -1px 0 #6a6a6a, inset 1px 1px 0 #303030;"></div>
<div class="t s c" style="left:794px;width:53px;text-align:center;top:718.95px;font-size:16px;color:#808080;letter-spacing:-0.5px;">ExtRef</div>
<div class="a" style="left:848px;top:717px;width:32px;height:18px;background:#404040;box-shadow:inset -1px -1px 0 #6a6a6a, inset 1px 1px 0 #303030;"></div>
<div class="t s c" style="left:848px;width:32px;text-align:center;top:718.95px;font-size:16px;color:#808080;letter-spacing:-0.5px;">Svc</div>
<div class="a" style="left:881px;top:717px;width:140px;height:18px;background:#404040;box-shadow:inset -1px -1px 0 #6a6a6a, inset 1px 1px 0 #303030;"></div>
<div class="t s c" style="left:881px;width:140px;text-align:center;top:718.20px;font-size:16.3px;color:#fff;">1988-01-01 07:04</div>
</body></html>
